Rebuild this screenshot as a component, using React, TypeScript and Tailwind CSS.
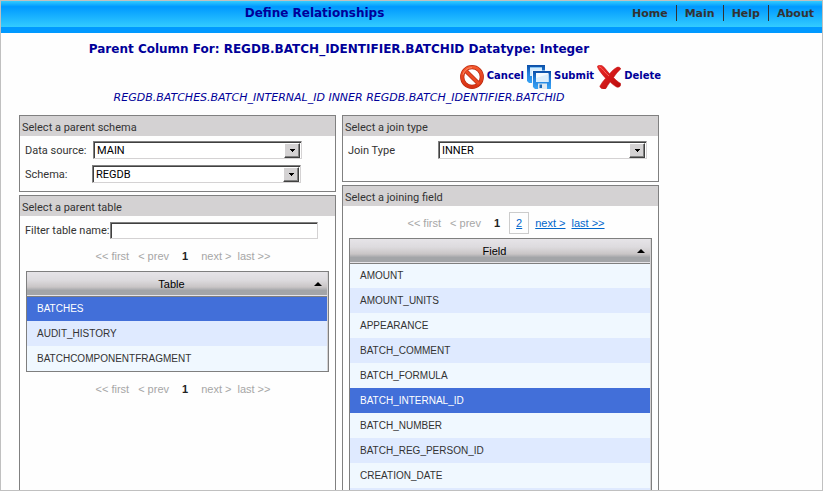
import { useState, type ReactNode } from "react";

const navItems = ["Home", "Main", "Help", "About"];
const tables = ["BATCHES", "AUDIT_HISTORY", "BATCHCOMPONENTFRAGMENT"];
const fields = [
  "AMOUNT",
  "AMOUNT_UNITS",
  "APPEARANCE",
  "BATCH_COMMENT",
  "BATCH_FORMULA",
  "BATCH_INTERNAL_ID",
  "BATCH_NUMBER",
  "BATCH_REG_PERSON_ID",
  "CREATION_DATE",
  "",
];

function CancelIcon() {
  return (
    <svg width="24" height="24" viewBox="0 0 24 24" aria-hidden="true">
      <defs>
        <linearGradient id="ring" x1="0" y1="0" x2="0" y2="1">
          <stop offset="0" stopColor="#f4572c" />
          <stop offset="1" stopColor="#d83214" />
        </linearGradient>
      </defs>
      <circle cx="12" cy="12" r="9.8" fill="#fff" stroke="#b82a10" strokeWidth="4.2" />
      <path d="M5.4 5.4 18.6 18.6" stroke="#b82a10" strokeWidth="4.2" />
      <circle cx="12" cy="12" r="9.8" fill="none" stroke="url(#ring)" strokeWidth="2.8" />
      <path d="M5 5 19 19" stroke="#ea4a24" strokeWidth="2.8" />
      <path d="M3 9.5A9.6 9.6 0 0 1 12 2.6" fill="none" stroke="#ff9a78" strokeWidth="0.8" />
    </svg>
  );
}

function SubmitIcon() {
  return (
    <svg width="24" height="24" viewBox="0 0 24 24" aria-hidden="true">
      <defs>
        <linearGradient id="disk" x1="0" y1="0" x2="0" y2="1">
          <stop offset="0" stopColor="#0c4ea6" />
          <stop offset="0.5" stopColor="#2484e0" />
          <stop offset="1" stopColor="#3aa4f4" />
        </linearGradient>
      </defs>
      <path d="M0 0H18V18H2L0 16Z" fill="url(#disk)" />
      <path d="M3 2H15V11H3Z" fill="#d2ebfd" />
      <path d="M3 2H15V3H3Z" fill="#7fc0f2" />
      <path d="M5 5.5H24V24H7L5 22Z" fill="#f2f9ff" />
      <path d="M6 6H24V24H8L6 22Z" fill="url(#disk)" />
      <path d="M9 8H21.5V17H9Z" fill="#f6fbff" />
      <path d="M9 13 21.5 9V17H9Z" fill="#dceefc" />
      <path d="M11 18.5H20V24H11Z" fill="#e0eaf2" />
      <path d="M12.5 19.5H15V23H12.5Z" fill="#1767b8" />
    </svg>
  );
}

function DeleteIcon() {
  return (
    <svg width="24" height="24" viewBox="0 0 24 24" aria-hidden="true">
      <defs>
        <linearGradient id="cross" x1="0" y1="0" x2="1" y2="1">
          <stop offset="0" stopColor="#ee2a2a" />
          <stop offset="1" stopColor="#b80808" />
        </linearGradient>
      </defs>
      <path
        d="M.2 1.4C1.6-.4 5-.1 6.6 1.8 8.8 4.4 10.6 6.4 12.6 8.8 14.8 6 17.2 3.8 20 2.3 21.6 1.6 23.6 2.6 23.8 4 20.9 6.4 18.6 9.4 16.6 12.6 18.8 15 21 17 23.7 18.4 24.2 20.8 22.4 22.8 20 22.2 17.2 20.8 15.2 19 13.2 17 11.6 19 10.2 21.2 9 23.4 7 24.8 3.4 23.8 2.8 21.2 4.4 18.4 6.4 15.6 8.6 13.2 5.6 9.8 1.8 5.8.2 1.4Z"
        fill="url(#cross)"
        stroke="#c01414"
        strokeWidth="0.5"
      />
      <path d="M2 1.8C5 2.4 8 8 12 11" fill="none" stroke="#fa6a60" strokeWidth="1" />
    </svg>
  );
}

function Action({ icon, children }: { icon: ReactNode; children: ReactNode }) {
  return (
    <button type="button" className="flex items-center gap-[3px] text-[10px] leading-3 font-bold text-[#000099]">
      {icon}
      <span className="pb-0.5">{children}</span>
    </button>
  );
}

function Panel({ title, grow, children }: { title: string; grow?: boolean; children: ReactNode }) {
  return (
    <section className={grow ? "flex-1 border border-[#808080]" : "border border-[#808080]"}>
      <h2 className="h-5 bg-[#d4d2d3] pl-0.5 text-[11px] leading-6 text-[#333]">{title}</h2>
      {children}
    </section>
  );
}

function Select({ id, value }: { id: string; value: string }) {
  return (
    <div className="relative w-[209px]">
      <select
        id={id}
        defaultValue={value}
        className="block h-[18px] w-full appearance-none border border-t-[#808080] border-r-[#d4d2d3] border-b-[#d4d2d3] border-l-[#808080] bg-white pt-px pl-[3px] text-[11px] leading-[15px] text-black shadow-[inset_1px_1px_0_#404040] outline-none"
      >
        <option>{value}</option>
      </select>
      <span className="pointer-events-none absolute top-0.5 right-0.5 bottom-px flex w-4 items-center justify-center border border-t-white border-r-[#404040] border-b-[#404040] border-l-white bg-[#d4d2d3] shadow-[inset_-1px_-1px_0_#808080]">
        <svg width="5" height="3" viewBox="0 0 5 3" shapeRendering="crispEdges" aria-hidden="true">
          <path d="M0 0H5V1H4V2H3V3H2V2H1V1H0Z" fill="#000" />
        </svg>
      </span>
    </div>
  );
}

function Pager({ more }: { more?: boolean }) {
  return (
    <nav
      aria-label="Pages"
      className="flex h-8 items-center justify-center pt-0.5 pl-[11px] font-['Liberation_Sans',Arial,sans-serif] text-[11px] text-[#a6a6a6]"
    >
      <span className="mr-[9px]">&lt;&lt; first</span>
      <span className="mr-[13px]">&lt; prev</span>
      <span className="font-bold text-[#222]">1</span>
      {more ? (
        <>
          <a href="#2" className="mr-1.5 ml-[9px] border border-[#ccc] px-1.5 leading-5 text-[#0066cc] underline">
            2
          </a>
          <a href="#next" className="mr-1.5 text-[#0066cc] underline">
            next &gt;
          </a>
          <a href="#last" className="text-[#0066cc] underline">
            last &gt;&gt;
          </a>
        </>
      ) : (
        <>
          <span className="mr-1.5 ml-[13px]">next &gt;</span>
          <span>last &gt;&gt;</span>
        </>
      )}
    </nav>
  );
}

function Grid({ heading, rows, initial }: { heading: string; rows: string[]; initial: string }) {
  const [selected, setSelected] = useState(initial);
  return (
    <div className="mx-1.5 border border-[#7f7f7f] bg-[#d4d2d3] pr-px">
      <table className="w-full border-collapse font-['Liberation_Sans',Arial,sans-serif] text-[10px]">
        <thead>
          <tr className="h-6 border-b border-[#7f7f7f] bg-[linear-gradient(#e6e4e8_0%,#dddbde_35%,#c9c5c6_65%,#a3a5a8_80%,#a3a5a8_100%)] text-[11px]">
            <th scope="col" aria-sort="ascending" className="p-0 font-normal text-black">
              <div className="flex items-center pr-[5px] pl-0.5">
                <span className="flex-1 text-center">{heading}</span>
                <svg width="8" height="4" viewBox="0 0 8 4" aria-hidden="true">
                  <path d="M0 4 4 0 8 4Z" fill="#000" />
                </svg>
              </div>
            </th>
          </tr>
        </thead>
        <tbody>
          {rows.map((row, i) => (
            <tr
              key={row}
              onClick={() => setSelected(row)}
              className={
                row === selected
                  ? "h-[25px] bg-[#426fd9] text-white"
                  : i % 2 === 1
                    ? "h-[25px] bg-[#dfeaff] text-[#333]"
                    : "h-[25px] bg-[#f0f8ff] text-[#333]"
              }
            >
              <td className="py-0 pr-0 pl-[10px]">{row}</td>
            </tr>
          ))}
        </tbody>
      </table>
    </div>
  );
}

export default function App() {
  return (
    <div className="flex h-screen flex-col overflow-hidden border border-[#c0c0c0] bg-[#fefefe] font-[Roboto,Tahoma,sans-serif]">
      <header className="flex h-8 shrink-0 border-b-6 border-[#0099ff] bg-[linear-gradient(#33ccff_0%,#0099ff_22%,#33ccff_100%)] font-['DejaVu_Sans',Verdana,sans-serif] font-bold">
        <h1 className="flex-1 pl-1 text-center text-[12px] leading-6 text-[#000099]">Define Relationships</h1>
        <nav aria-label="Main" className="flex items-center pb-0.5 text-[11px] leading-[15px] text-[#333]">
          {navItems.map((item) => (
            <a key={item} href={`#${item}`} className="border-l border-[#333] px-2 pt-px first:border-l-0">
              {item}
            </a>
          ))}
        </nav>
      </header>

      <main className="flex min-h-0 w-full max-w-[658px] flex-1 flex-col pl-[18px]">
        <div className="shrink-0 font-['DejaVu_Sans',Verdana,sans-serif] text-[#000099]">
          <h2 className="pt-1.5 text-center text-[12px] leading-5 font-bold">
            Parent Column For: REGDB.BATCH_IDENTIFIER.BATCHID Datatype: Integer
          </h2>
          <div className="-mr-0.5 flex justify-end gap-[3px] pt-1.5">
            <Action icon={<CancelIcon />}>Cancel</Action>
            <Action icon={<SubmitIcon />}>Submit</Action>
            <Action icon={<DeleteIcon />}>Delete</Action>
          </div>
          <p className="pt-px text-center text-[11px] leading-4 italic">
            REGDB.BATCHES.BATCH_INTERNAL_ID INNER REGDB.BATCH_IDENTIFIER.BATCHID
          </p>
        </div>

        <div className="flex flex-1 gap-1.5 pt-[9px]">
          <div className="flex flex-1 flex-col gap-[3px]">
            <Panel title="Select a parent schema">
              <div className="flex flex-col gap-1.5 pt-[5px] pb-2 pl-[5px] text-[11px] text-[#333]">
                <div className="flex items-center">
                  <label htmlFor="source" className="w-[68px] pt-0.5 leading-4">
                    Data source:
                  </label>
                  <Select id="source" value="MAIN" />
                </div>
                <div className="flex items-center">
                  <label htmlFor="schema" className="w-[67px] pt-0.5 leading-4">
                    Schema:
                  </label>
                  <Select id="schema" value="REGDB" />
                </div>
              </div>
            </Panel>
            <Panel title="Select a parent table" grow>
              <div className="flex items-center pt-[5px] pl-[5px] text-[11px] text-[#333]">
                <label htmlFor="filter" className="w-[85px] pt-0.5 leading-4 whitespace-nowrap">
                  Filter table name:
                </label>
                <input
                  id="filter"
                  type="text"
                  className="h-[17px] w-[208px] border border-t-[#808080] border-r-[#d4d2d3] border-b-[#d4d2d3] border-l-[#808080] bg-white px-[3px] shadow-[inset_1px_1px_0_#404040] outline-none"
                />
              </div>
              <Pager />
              <Grid heading="Table" rows={tables} initial="BATCHES" />
              <Pager />
            </Panel>
          </div>

          <div className="flex flex-1 flex-col gap-[3px]">
            <Panel title="Select a join type">
              <div className="flex items-center pt-[5px] pb-[22px] pl-[5px] text-[11px] text-[#333]">
                <label htmlFor="join" className="w-[90px] pt-0.5 leading-4">
                  Join Type
                </label>
                <Select id="join" value="INNER" />
              </div>
            </Panel>
            <Panel title="Select a joining field" grow>
              <Pager more />
              <Grid heading="Field" rows={fields} initial="BATCH_INTERNAL_ID" />
            </Panel>
          </div>
        </div>
      </main>
    </div>
  );
}
